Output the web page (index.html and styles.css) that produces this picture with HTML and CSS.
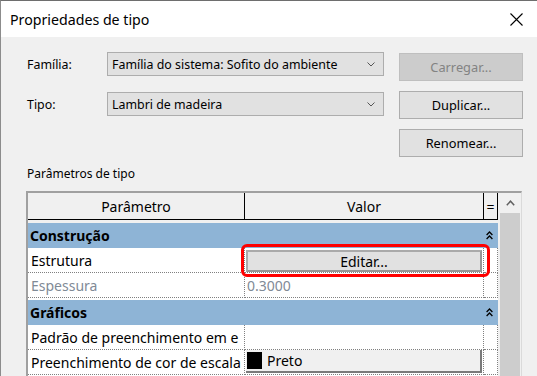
FILE: index.html
```html
<!DOCTYPE html>
<html lang="pt">
<head>
<meta charset="utf-8">
<title>Propriedades de tipo</title>
<link rel="stylesheet" href="styles.css">
</head>
<body>
<div class="window">
  <div class="titlebar">
    <span class="title">Propriedades de tipo</span>
    <svg class="close" width="13" height="13" viewBox="0 0 13 13"><path d="M0.5 0.5 L12.5 12.5 M12.5 0.5 L0.5 12.5" stroke="#000" stroke-width="1.1" fill="none"/></svg>
  </div>
  <div class="content">
    <div class="top">
      <div class="fields">
        <div class="field">
          <span class="field-label">Família:</span>
          <div class="combo"><span>Família do sistema: Sofito do ambiente</span><svg width="8" height="5" viewBox="0 0 8 5"><polyline points="0.5,0.5 4,4 7.5,0.5" stroke="#555" stroke-width="1" fill="none"/></svg></div>
        </div>
        <div class="field">
          <span class="field-label">Tipo:</span>
          <div class="combo"><span>Lambri de madeira</span><svg width="8" height="5" viewBox="0 0 8 5"><polyline points="0.5,0.5 4,4 7.5,0.5" stroke="#555" stroke-width="1" fill="none"/></svg></div>
        </div>
      </div>
      <div class="buttons">
        <div class="btn disabled">Carregar...</div>
        <div class="btn">Duplicar...</div>
        <div class="btn">Renomear...</div>
      </div>
    </div>
    <div class="section-label">Parâmetros de tipo</div>
    <div class="grid">
      <div class="table">
        <div class="head">
          <div class="hcell">Parâmetro</div>
          <div class="hcell">Valor</div>
          <div class="hcell">=</div>
        </div>
        <div class="head-gap"></div>
        <div class="rows">
          <div class="cat">
            <div class="cat-name">Construção</div>
            <div></div>
            <div class="cat-icon"><svg width="7" height="9" viewBox="0 0 7 9"><polyline points="0.6,4 3.5,1 6.4,4" stroke="#000" stroke-width="1.3" fill="none"/><polyline points="0.6,8 3.5,5 6.4,8" stroke="#000" stroke-width="1.3" fill="none"/></svg></div>
          </div>
          <div class="row">
            <div class="cell name">Estrutura</div>
            <div class="cell value pad-btn"><div class="edit-btn">Editar...</div></div>
            <div class="cell eq"></div>
          </div>
          <div class="row muted">
            <div class="cell name">Espessura</div>
            <div class="cell value text">0.3000</div>
            <div class="cell eq"></div>
          </div>
          <div class="cat spaced">
            <div class="cat-name">Gráficos</div>
            <div></div>
            <div class="cat-icon"><svg width="7" height="9" viewBox="0 0 7 9"><polyline points="0.6,4 3.5,1 6.4,4" stroke="#000" stroke-width="1.3" fill="none"/><polyline points="0.6,8 3.5,5 6.4,8" stroke="#000" stroke-width="1.3" fill="none"/></svg></div>
          </div>
          <div class="row">
            <div class="cell name">Padrão de preenchimento em e</div>
            <div class="cell value"></div>
            <div class="cell eq"></div>
          </div>
          <div class="row">
            <div class="cell name">Preenchimento de cor de escala</div>
            <div class="cell value pad-color"><div class="color-btn"><span class="swatch"></span><span>Preto</span></div></div>
            <div class="cell eq"></div>
          </div>
        </div>
      </div>
      <div class="scrollbar">
        <div class="sb-up"><svg width="9" height="6" viewBox="0 0 9 6"><polyline points="0.8,5.2 4.5,1.2 8.2,5.2" stroke="#606060" stroke-width="1.5" fill="none"/></svg></div>
        <div class="sb-thumb"></div>
      </div>
    </div>
  </div>
  <div class="highlight"></div>
</div>
</body>
</html>
```

FILE: styles.css
```css
* { box-sizing: border-box; }
html, body { margin: 0; padding: 0; }
body {
  width: 537px;
  height: 376px;
  overflow: hidden;
  font-family: "Segoe UI", "Noto Sans", sans-serif;
  font-size: 12.4px;
  color: #000;
  background: #f0f0f0;
}
.window {
  position: relative;
  width: 537px;
  height: 376px;
  border-top: 1px solid #6e6e6e;
  border-left: 1px solid #8c8c8c;
  background: #f0f0f0;
  overflow: hidden;
}
.titlebar {
  height: 36px;
  background: #fff;
  display: flex;
  align-items: center;
  justify-content: space-between;
  padding: 0 14px 0 9px;
}
.title { font-size: 14.2px; }
.close { display: block; }

.top { display: flex; height: 120px; }
.fields {
  padding: 15px 0 0 26px;
  display: flex;
  flex-direction: column;
  gap: 16px;
}
.field { display: flex; align-items: center; height: 24px; }
.field-label { width: 80px; }
.combo {
  width: 277px;
  height: 24px;
  background: #e1e1e1;
  border: 1px solid #adadad;
  display: flex;
  align-items: center;
  justify-content: space-between;
  padding: 0 8px 0 4px;
}
.combo svg { display: block; }
.buttons {
  margin-left: 15px;
  padding-top: 16px;
  display: flex;
  flex-direction: column;
  gap: 10px;
}
.btn {
  width: 124px;
  height: 28px;
  background: #e1e1e1;
  border: 1px solid #adadad;
  display: flex;
  align-items: center;
  justify-content: center;
  font-size: 12.8px;
}
.btn.disabled { background: #cccccc; border-color: #bfbfbf; color: #838383; }

.section-label {
  height: 17px;
  line-height: 17px;
  margin: 8px 0 9px 26px;
  font-size: 12px;
}

.grid {
  display: flex;
  margin-left: 25px;
  width: 496px;
  height: 200px;
  border-top: 2px solid #a0a0a0;
  border-left: 2px solid #a0a0a0;
  border-right: 1px solid #dadada;
}
.table { width: 470px; flex: none; }
.head {
  display: grid;
  grid-template-columns: 217px 239px 14px;
  height: 27px;
  background: #f0f0f0;
}
.hcell {
  border-right: 1px solid #000;
  border-bottom: 1px solid #000;
  display: flex;
  align-items: center;
  justify-content: center;
  font-size: 14px;
}
.head-gap { height: 3px; background: #f0f0f0; }
.rows { background: #fff; height: 200px; }
.cat {
  display: grid;
  grid-template-columns: 217px 239px 14px;
  height: 25px;
  background: #8eb4d6;
}
.cat.spaced { margin-top: 2px; }
.cat-name {
  font-weight: bold;
  font-size: 14px;
  padding-left: 2px;
  display: flex;
  align-items: center;
  white-space: nowrap;
}
.cat-icon { display: flex; align-items: center; padding-left: 2px; }
.cat-icon svg { display: block; }
.row {
  display: grid;
  grid-template-columns: 217px 239px 14px;
  height: 25px;
}
.cell {
  border-right: 1px dotted #808080;
  border-bottom: 1px dotted #808080;
  overflow: hidden;
  white-space: nowrap;
  font-size: 14px;
}
.cell.name, .cell.text {
  display: flex;
  align-items: center;
  padding-left: 3px;
}
.cell.text { padding-left: 2px; }
.row.muted .cell { color: #7f8a96; }
.pad-btn { padding: 2px 1px 0 1px; }
.edit-btn {
  height: 22px;
  background: #e1e1e1;
  border: 2px solid #aaaaaa;
  border-right-color: #969696;
  border-bottom-color: #969696;
  display: flex;
  align-items: center;
  justify-content: center;
}
.pad-color { padding: 0 1px 0 1px; }
.color-btn {
  height: 23px;
  background: #f0f0f0;
  border-right: 2px solid #7a7a7a;
  border-bottom: 2px solid #7a7a7a;
  display: flex;
  align-items: center;
}
.swatch {
  width: 15px;
  height: 17px;
  background: #000;
  margin: 0 5px 0 1px;
}

.scrollbar {
  width: 23px;
  flex: none;
  background: #f0f0f0;
  padding: 0 1px 0 2px;
  display: flex;
  flex-direction: column;
}
.sb-up {
  height: 20px;
  display: flex;
  align-items: center;
  justify-content: center;
}
.sb-up svg { display: block; }
.sb-thumb { flex: 1; background: #cdcdcd; }

.highlight {
  position: absolute;
  left: 240px;
  top: 243px;
  width: 249px;
  height: 33px;
  border: 3px solid #ff0000;
  border-radius: 6px;
}
```
